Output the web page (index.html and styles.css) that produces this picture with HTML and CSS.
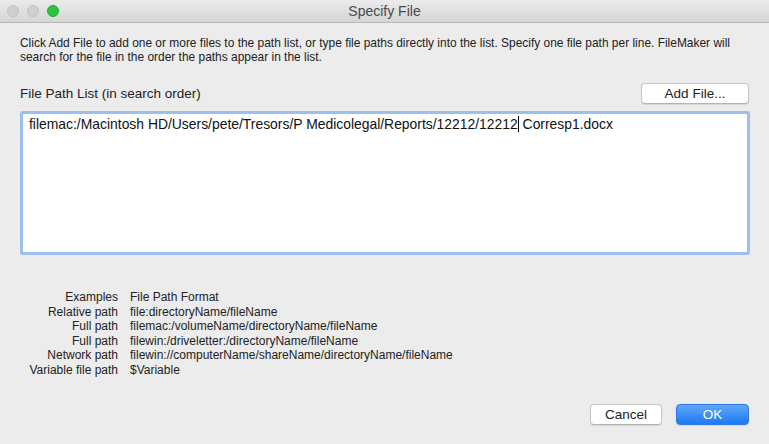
FILE: index.html
```html
<!DOCTYPE html>
<html>
<head>
<meta charset="utf-8">
<link rel="stylesheet" href="styles.css">
</head>
<body>
<div class="window">
  <div class="titlebar">
    <div class="lights">
      <span class="light gray"></span>
      <span class="light gray"></span>
      <span class="light green"></span>
    </div>
    <div class="title">Specify File</div>
  </div>
  <div class="content">
    <p class="intro">Click Add File to add one or more files to the path list, or type file paths directly into the list. Specify one file path per line. FileMaker will search for the file in the order the paths appear in the list.</p>
    <div class="listhead">
      <span class="label">File Path List (in search order)</span>
      <button class="btn">Add File...</button>
    </div>
    <div class="textbox">
      <div class="path">filemac:/Macintosh HD/Users/pete/Tresors/P Medicolegal/Reports/12212/12212<span class="caret"></span> Corresp1.docx</div>
    </div>
    <div class="examples">
      <span class="k">Examples</span><span class="v">File Path Format</span>
      <span class="k">Relative path</span><span class="v">file:directoryName/fileName</span>
      <span class="k">Full path</span><span class="v">filemac:/volumeName/directoryName/fileName</span>
      <span class="k">Full path</span><span class="v">filewin:/driveletter:/directoryName/fileName</span>
      <span class="k">Network path</span><span class="v">filewin://computerName/shareName/directoryName/fileName</span>
      <span class="k">Variable file path</span><span class="v">$Variable</span>
    </div>
    <div class="actions">
      <button class="btn cancel">Cancel</button>
      <button class="btn ok">OK</button>
    </div>
  </div>
</div>
</body>
</html>
```

FILE: styles.css
```css
* { box-sizing: border-box; }
html, body { margin: 0; padding: 0; }
body {
  width: 769px;
  height: 444px;
  overflow: hidden;
  background: #ececec;
  font-family: "Liberation Sans", Arial, sans-serif;
  color: #1a1a1a;
}
.window { width: 769px; height: 444px; display: flex; flex-direction: column; }
.titlebar {
  height: 23px;
  background: linear-gradient(#ebebeb, #d5d5d5);
  border-bottom: 1px solid #b9b9b9;
  display: flex;
  align-items: center;
  position: relative;
}
.lights { display: flex; gap: 8px; padding-left: 7px; }
.light { width: 12px; height: 12px; border-radius: 50%; display: block; }
.light.gray { background: #d0d0d0; border: 1px solid #c2c2c2; }
.light.green { background: #2bc43e; border: 1px solid #25a833; }
.title {
  position: absolute;
  left: 0; right: 0; top: 3px;
  text-align: center;
  font-size: 14px;
  color: #4a4a4a;
}
.content { padding: 13px 19px 0 20px; display: flex; flex-direction: column; }
.intro {
  margin: 0;
  font-size: 11.95px;
  line-height: 14px;
  color: #222;
  width: 740px;
}
.listhead {
  display: flex;
  justify-content: space-between;
  align-items: center;
  margin-top: 18px;
  height: 22px;
}
.label { font-size: 13.5px; color: #222; }
.btn {
  font-family: "Liberation Sans", Arial, sans-serif;
  font-size: 13.5px;
  color: #222;
  background: #fff;
  border: 1px solid #c6c6c6;
  border-bottom-color: #b3b3b3;
  border-radius: 4px;
  height: 21px;
  padding: 0;
  box-shadow: 0 0.5px 1px rgba(0,0,0,0.1);
}
.listhead .btn { width: 108px; margin-right: 1px; }
.textbox {
  margin-top: 7px;
  height: 144px;
  width: 730px;
  border: 3px solid #9bbfef;
  border-radius: 3px;
  background: #fff;
  padding: 2px 6px;
}
.path { font-size: 13.9px; color: #111; line-height: 16px; }
.caret {
  display: inline-block;
  width: 1px;
  height: 16px;
  background: #000;
  vertical-align: -3px;
}
.examples {
  margin-top: 35px;
  display: grid;
  grid-template-columns: 98px auto;
  column-gap: 12px;
  font-size: 12px;
  line-height: 14.5px;
  color: #222;
}
.examples .k { text-align: right; }
.actions {
  display: flex;
  justify-content: flex-end;
  gap: 14px;
  margin-top: 27px;
  padding-right: 1px;
}
.actions .cancel { width: 72px; }
.actions .ok {
  width: 73px;
  color: #fff;
  background: linear-gradient(#5fa6fb, #1e79f3);
  border-color: #2b7ae6;
}
```
